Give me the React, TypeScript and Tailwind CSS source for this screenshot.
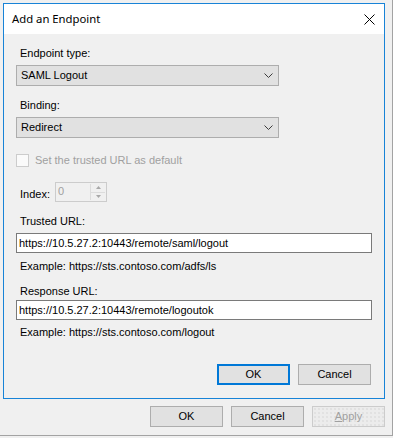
const font = { fontFamily: '"Liberation Sans", Arial, sans-serif' };

function Chevron() {
  return (
    <svg width="9" height="5" viewBox="0 0 9 5" className="shrink-0">
      <polyline points="0.5,0.5 4.5,4.5 8.5,0.5" fill="none" stroke="#3c3c3c" strokeWidth="1" />
    </svg>
  );
}

function Select({ value }: { value: string }) {
  return (
    <div className="w-[263px] h-[21px] bg-[#e1e1e1] border border-[#adadad] flex items-center justify-between pl-[4px] pr-[5px] text-[11px] text-black">
      <span>{value}</span>
      <Chevron />
    </div>
  );
}

function Label({ children, className = "" }: { children: React.ReactNode; className?: string }) {
  return <div className={`h-[14px] leading-[14px] pl-[4px] text-[11px] text-black ${className}`}>{children}</div>;
}

function TextBox({ value, className = "" }: { value: string; className?: string }) {
  return (
    <div className={`w-[356px] h-[20px] bg-white border border-[#7a7a7a] flex items-center pl-[2px] text-[11px] text-black ${className}`}>
      {value}
    </div>
  );
}

function Btn({ children, primary = false }: { children: React.ReactNode; primary?: boolean }) {
  return (
    <div
      className={`w-[73px] h-[21px] bg-[#e1e1e1] flex items-center justify-center text-[11px] text-black ${
        primary ? "border-2 border-[#0078d7]" : "border border-[#adadad]"
      }`}
    >
      {children}
    </div>
  );
}

export default function App() {
  return (
    <div className="w-[393px] h-[438px] bg-[#f0f0f0] overflow-hidden" style={font}>
      <div className="w-[393px] h-[436px] border-r border-b border-[#a3a3a3] flex flex-col">
        {/* dialog */}
        <div className="ml-[3px] mt-[3px] w-[382px] h-[396px] border border-[#1883d7] flex flex-col">
          <div className="h-[30px] bg-white flex items-center justify-between pl-[8px] pr-[9px]">
            <span className="text-[11.3px] text-black" style={{ fontFamily: '"Noto Sans", "Open Sans", sans-serif' }}>
              Add an Endpoint
            </span>
            <svg width="11" height="11" viewBox="0 0 11 11">
              <line x1="0.5" y1="0.5" x2="10.5" y2="10.5" stroke="#000" strokeWidth="1" />
              <line x1="10.5" y1="0.5" x2="0.5" y2="10.5" stroke="#000" strokeWidth="1" />
            </svg>
          </div>

          <div className="flex-1 bg-[#f0f0f0] pl-[12px] flex flex-col">
            <Label className="mt-[12px]">Endpoint type:</Label>
            <div className="mt-[5px]">
              <Select value="SAML Logout" />
            </div>

            <Label className="mt-[12px]">Binding:</Label>
            <div className="mt-[5px]">
              <Select value="Redirect" />
            </div>

            <div className="mt-[16px] h-[13px] flex items-center gap-[6px]">
              <div className="w-[13px] h-[13px] border border-[#cccccc] bg-[#fafafa]" />
              <span className="text-[11px] text-[#a0a0a0]">Set the trusted URL as default</span>
            </div>

            <div className="mt-[15px] h-[20px] flex items-start">
              <span className="pl-[4px] mt-[5px] h-[14px] leading-[14px] text-[11px] text-black w-[39px]">Index:</span>
              <div className="w-[52px] h-[20px] border border-[#cccccc] bg-[#f0f0f0] flex">
                <div className="flex-1 pl-[2px] pt-[1px] text-[11px] leading-[14px] text-[#a0a0a0]">0</div>
                <div className="w-[15px] mr-[1px] mt-[1px] mb-[1px] flex flex-col border-l border-[#dcdcdc]">
                  <div className="flex-1 flex items-center justify-center border-b border-[#dcdcdc]">
                    <svg width="5" height="3" viewBox="0 0 5 3">
                      <polygon points="2.5,0 5,3 0,3" fill="#a8a8a8" />
                    </svg>
                  </div>
                  <div className="flex-1 flex items-center justify-center">
                    <svg width="5" height="3" viewBox="0 0 5 3">
                      <polygon points="0,0 5,0 2.5,3" fill="#a8a8a8" />
                    </svg>
                  </div>
                </div>
              </div>
            </div>

            <Label className="mt-[12px]">Trusted URL:</Label>
            <TextBox className="mt-[5px]" value="https://10.5.27.2:10443/remote/saml/logout" />
            <Label className="mt-[6px]">Example: https://sts.contoso.com/adfs/ls</Label>

            <Label className="mt-[11px]">Response URL:</Label>
            <TextBox className="mt-[2px]" value="https://10.5.27.2:10443/remote/logoutok" />
            <Label className="mt-[5px]">Example: https://sts.contoso.com/logout</Label>

            <div className="mt-[25px] flex justify-end gap-[8px] pr-[13px]">
              <Btn primary>OK</Btn>
              <Btn>Cancel</Btn>
            </div>
          </div>
        </div>

        {/* parent window buttons */}
        <div className="mt-[7px] flex justify-end gap-[8px] pr-[7px]">
          <Btn>OK</Btn>
          <Btn>Cancel</Btn>
          <div className="w-[73px] h-[21px] border border-[#cccccc] bg-[#ececec] bg-[radial-gradient(circle,#d4d4d4_0.6px,transparent_0.8px)] bg-[length:4px_4px] flex items-center justify-center text-[11px] text-[#a0a0a0]">
            <span>
              <span className="underline">A</span>pply
            </span>
          </div>
        </div>
      </div>
    </div>
  );
}
